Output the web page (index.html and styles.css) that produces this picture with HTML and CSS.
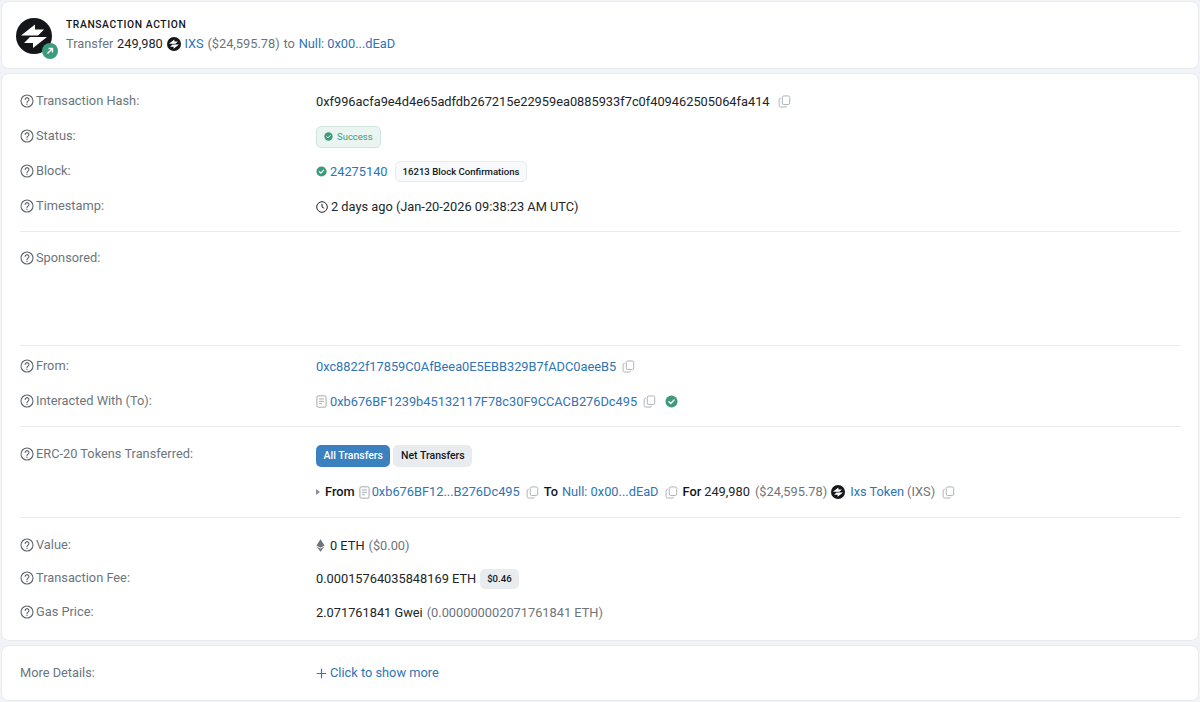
FILE: index.html
```html
<!DOCTYPE html>
<html lang="en">
<head>
<meta charset="utf-8">
<title>Transaction Details</title>
<link rel="stylesheet" href="styles.css">
</head>
<body>
<svg class="defs" width="0" height="0" aria-hidden="true">
  <defs>
    <symbol id="q" viewBox="0 0 14 14"><circle cx="7" cy="7" r="6" fill="none" stroke="currentColor" stroke-width="1.1"/><path d="M5.2 5.5a1.85 1.85 0 1 1 2.8 1.6c-.7.4-1 .7-1 1.4" fill="none" stroke="currentColor" stroke-width="1.1" stroke-linecap="round"/><circle cx="7" cy="10.3" r=".7" fill="currentColor"/></symbol>
    <symbol id="copy" viewBox="0 0 14 14"><rect x="4.6" y="1" width="8" height="9.2" rx="1.6" fill="none" stroke="currentColor" stroke-width="1"/><path d="M3.2 3.6h-.4A1.6 1.6 0 0 0 1.2 5.2v6.2A1.6 1.6 0 0 0 2.8 13h4.8A1.6 1.6 0 0 0 9.2 11.600" fill="none" stroke="currentColor" stroke-width="1"/></symbol>
    <symbol id="check" viewBox="0 0 14 14"><circle cx="7" cy="7" r="6.500" fill="currentColor"/><path d="M4.200 7.200l2 1.900 3.600-3.800" fill="none" stroke="#fff" stroke-width="1.500" stroke-linecap="round" stroke-linejoin="round"/></symbol>
    <symbol id="doc" viewBox="0 0 12 14"><rect x="1" y=".8" width="10" height="12.400" rx="1.500" fill="none" stroke="currentColor" stroke-width="1"/><path d="M3.400 4.200h5.200M3.400 6.800h5.200M3.400 9.400h3" fill="none" stroke="currentColor" stroke-width="1"/></symbol>
    <symbol id="ixs" viewBox="0 0 36 36"><circle cx="18" cy="18" r="18" fill="#14161a"/><path d="M5 17.500 19 6.500 19 11.500 28 11.500 22 17.500Z" fill="#fff"/><path d="M31 19 17 30 17 25 8 25 14 19Z" fill="#fff"/></symbol>
  </defs>
</svg>
<main class="page">
  <section class="card action">
    <div class="action-logo">
      <svg class="logo-main"><use href="#ixs"/></svg>
      <span class="logo-badge"><svg viewBox="0 0 10 10" width="10" height="10"><path d="M2.500 7.500 7.500 2.500M3.500 2.500h4v4" fill="none" stroke="#fff" stroke-width="1.300"/></svg></span>
    </div>
    <div class="action-text">
      <div class="action-title">TRANSACTION ACTION</div>
      <div class="action-line"><span class="muted">Transfer</span> <span class="dark">249,980</span> <svg class="ico-token"><use href="#ixs"/></svg> <a class="link">IXS</a> <span class="muted">($24,595.78)</span> <span class="muted">to</span> <a class="link">Null: 0x00...dEaD</a></div>
    </div>
  </section>

  <section class="card details">
    <div class="row first">
      <div class="label"><svg class="ico-q"><use href="#q"/></svg>Transaction Hash:</div>
      <div class="value"><span>0xf996acfa9e4d4e65adfdb267215e22959ea0885933f7c0f409462505064fa414</span><svg class="ico-copy gap-hash"><use href="#copy"/></svg></div>
    </div>
    <div class="row">
      <div class="label"><svg class="ico-q"><use href="#q"/></svg>Status:</div>
      <div class="value"><span class="status"><svg class="ico-check-sm"><use href="#check"/></svg>Success</span></div>
    </div>
    <div class="row">
      <div class="label"><svg class="ico-q"><use href="#q"/></svg>Block:</div>
      <div class="value"><svg class="ico-check"><use href="#check"/></svg><a class="link">24275140</a><span class="pill-conf">16213 Block Confirmations</span></div>
    </div>
    <div class="row">
      <div class="label"><svg class="ico-q"><use href="#q"/></svg>Timestamp:</div>
      <div class="value"><svg class="ico-clock" viewBox="0 0 12 12"><circle cx="6" cy="6" r="5.300" fill="none" stroke="currentColor" stroke-width="1"/><path d="M6 2.800V6l2.200 1.300" fill="none" stroke="currentColor" stroke-width="1"/></svg><span>2 days ago (Jan-20-2026 09:38:23 AM UTC)</span></div>
    </div>
    <hr class="divider d1">
    <div class="row sponsored">
      <div class="label"><svg class="ico-q"><use href="#q"/></svg>Sponsored:</div>
    </div>
    <hr class="divider d2">
    <div class="row">
      <div class="label"><svg class="ico-q"><use href="#q"/></svg>From:</div>
      <div class="value"><a class="link">0xc8822f17859C0AfBeea0E5EBB329B7fADC0aeeB5</a><svg class="ico-copy gap-c"><use href="#copy"/></svg></div>
    </div>
    <div class="row">
      <div class="label"><svg class="ico-q"><use href="#q"/></svg>Interacted With (To):</div>
      <div class="value"><svg class="ico-doc"><use href="#doc"/></svg><a class="link">0xb676BF1239b45132117F78c30F9CCACB276Dc495</a><svg class="ico-copy gap-c"><use href="#copy"/></svg><svg class="ico-verified"><use href="#check"/></svg></div>
    </div>
    <hr class="divider d3">
    <div class="row tokens">
      <div class="label token-label"><svg class="ico-q"><use href="#q"/></svg>ERC-20 Tokens Transferred:</div>
      <div class="tokens-body">
        <div class="tabs"><span class="tab active">All Transfers</span><span class="tab">Net Transfers</span></div>
        <div class="value transfer">
          <span class="caret"></span><b class="kw">From</b><svg class="ico-doc gap-doc"><use href="#doc"/></svg><a class="link">0xb676BF12...B276Dc495</a><svg class="ico-copy gap-c"><use href="#copy"/></svg><b class="kw gap-kw">To</b><a class="link gap-l">Null: 0x00...dEaD</a><svg class="ico-copy gap-c"><use href="#copy"/></svg><b class="kw gap-kw">For</b><span class="gap-s dark">249,980</span><span class="muted gap-m">($24,595.78)</span><svg class="ico-token gap-t"><use href="#ixs"/></svg><a class="link gap-ix">Ixs Token</a><span class="muted gap-s">(IXS)</span><svg class="ico-copy gap-w"><use href="#copy"/></svg>
        </div>
      </div>
    </div>
    <hr class="divider d4">
    <div class="row tight">
      <div class="label"><svg class="ico-q"><use href="#q"/></svg>Value:</div>
      <div class="value"><svg class="ico-eth" viewBox="0 0 10 14"><path d="M5 0 9.500 7 5 9.500.5 7Z" fill="#6c757d"/><path d="M.7 8.100 5 10.600 9.300 8.100 5 14Z" fill="#6c757d"/></svg><span>0 ETH</span><span class="muted gap-l">($0.00)</span></div>
    </div>
    <div class="row tight">
      <div class="label"><svg class="ico-q"><use href="#q"/></svg>Transaction Fee:</div>
      <div class="value"><span>0.00015764035848169 ETH</span><span class="pill-fee">$0.46</span></div>
    </div>
    <div class="row tight">
      <div class="label"><svg class="ico-q"><use href="#q"/></svg>Gas Price:</div>
      <div class="value"><span>2.071761841 Gwei</span><span class="muted gap-l">(0.000000002071761841 ETH)</span></div>
    </div>
  </section>

  <section class="card more">
    <div class="label plain">More Details:</div>
    <a class="link more-link"><svg class="ico-plus" viewBox="0 0 12 12"><path d="M6 .8v10.400M.8 6h10.400" fill="none" stroke="currentColor" stroke-width="1.300"/></svg>Click to show more</a>
  </section>
</main>
</body>
</html>
```

FILE: styles.css
```css
* { box-sizing: border-box; }
html, body { margin: 0; padding: 0; }
body {
  background: #f1f3f6;
  font-family: Roboto, "Liberation Sans", sans-serif;
  font-size: 12.800px;
  line-height: 18px;
  color: #212529;
  width: 1200px;
  height: 702px;
  overflow: hidden;
}
.defs { position: absolute; }
.page { display: flex; flex-direction: column; gap: 4px; padding: 1px; }
.card {
  background: #fff;
  border: 1px solid #e9ecef;
  border-radius: 8px;
}
.action { height: 68px; display: flex; align-items: center; padding: 0 14px; }
.action-logo { position: relative; width: 36px; height: 36px; margin-right: 14px; flex: none; margin-top: 1px; }
.logo-main { width: 36px; height: 36px; display: block; }
.logo-badge {
  position: absolute; right: -6px; bottom: -5px; width: 16px; height: 16px;
  border-radius: 50%; background: #3b9b7c; display: flex; align-items: center; justify-content: center;
}
.action-title { font-size: 10.300px; font-weight: 500; letter-spacing: .6px; color: #14161a; line-height: 14px; }
.action-line { margin-top: 3px; display: flex; align-items: center; gap: 3.800px; line-height: 18px; }
.muted { color: #6c757d; }
.dark { color: #212529; }
.link { color: #2f74b5; }
.details { height: 568px; padding: 9px 17px 0 18px; }
.row { display: flex; align-items: center; height: 35px; }
.label { width: 296px; flex: none; display: flex; align-items: center; color: #6c757d; }
.value { display: flex; align-items: center; white-space: nowrap; margin-top: 2px; }
.ico-q { width: 14px; height: 14px; margin-right: 2px; margin-left: -1px; color: #5c646c; flex: none; }
.label .ico-q { margin-left: 0; }
.ico-copy { width: 13px; height: 13px; color: #a8aeb5; flex: none; }
.gap-hash { margin-left: 8px; }
.gap-c { margin-left: 6px; }
.gap-w { margin-left: 7px; }
.status {
  display: inline-flex; align-items: center; height: 22px; padding: 0 7px;
  font-size: 9.500px; color: #3f9a7c; background: #eaf5f1; border: 1px solid #cfe6de; border-radius: 5px;
}
.ico-check-sm { width: 9px; height: 9px; margin-right: 4px; color: #3f9a7c; }
.ico-check { width: 11px; height: 11px; margin-right: 3px; color: #3f9a7c; }
.pill-conf {
  margin-left: 7px; height: 21px; padding: 0 7px; display: inline-flex; align-items: center;
  font-size: 9.600px; font-weight: 500; color: #14161a; background: #f8f9fa; border: 1px solid #e9ecef; border-radius: 5px;
}
.ico-clock { width: 12px; height: 12px; margin-right: 3px; color: #212529; }
.divider { border: 0; border-top: 1px solid #e9ecef; margin: 0; }
.d1 { margin-top: 8px; }
.d2 { margin-bottom: 2px; }
.sponsored { height: 113px; align-items: flex-start; padding-top: 17px; }
.ico-doc { width: 11px; height: 13px; color: #9aa1a8; margin-right: 3px; flex: none; }
.ico-verified { width: 13px; height: 13px; color: #3f9a7c; margin-left: 9px; }
.tokens { height: 90px; align-items: flex-start; padding-top: 17px; }
.token-label { margin-top: 1px; }
.d3 { margin-top: 8px; }
.tokens-body { display: flex; flex-direction: column; gap: 16px; }
.tabs { display: flex; gap: 3px; margin-top: 1px; }
.tab {
  height: 22px; padding: 0 7.500px; display: inline-flex; align-items: center; border-radius: 5px;
  font-size: 10.500px; font-weight: 500; background: #e9ecef; color: #14161a;
}
.tab.active { background: #3b80bf; color: #fff; }
.transfer { margin-top: 0; }
.transfer .ico-doc { margin-right: 2px; }
.caret { width: 0; height: 0; border-left: 4px solid #8a9097; border-top: 3.500px solid transparent; border-bottom: 3.500px solid transparent; margin-right: 5px; }
.kw { font-weight: 500; color: #14161a; }
.gap-doc { margin-left: 4px; }
.gap-kw { margin-left: 5px; }
.gap-l { margin-left: 4px; }
.gap-s { margin-left: 3px; }
.gap-m { margin-left: 5px; }
.gap-t { margin-left: 4px; }
.gap-ix { margin-left: 5px; }
.ico-token { width: 14px; height: 14px; flex: none; }
.d4 { margin-bottom: 10px; }
.tight { height: 33.500px; }
.ico-eth { width: 9px; height: 13px; margin-right: 5px; }
.pill-fee {
  margin-left: 4px; height: 20px; padding: 0 7px; display: inline-flex; align-items: center;
  font-size: 9.600px; font-weight: 500; color: #14161a; background: #e9ecef; border-radius: 5px;
}
.more { height: 56px; display: flex; align-items: center; padding: 0 18px; }
.plain { color: #6c757d; }
.more-link { display: flex; align-items: center; }
.ico-plus { width: 11px; height: 11px; margin-right: 3px; }
```
